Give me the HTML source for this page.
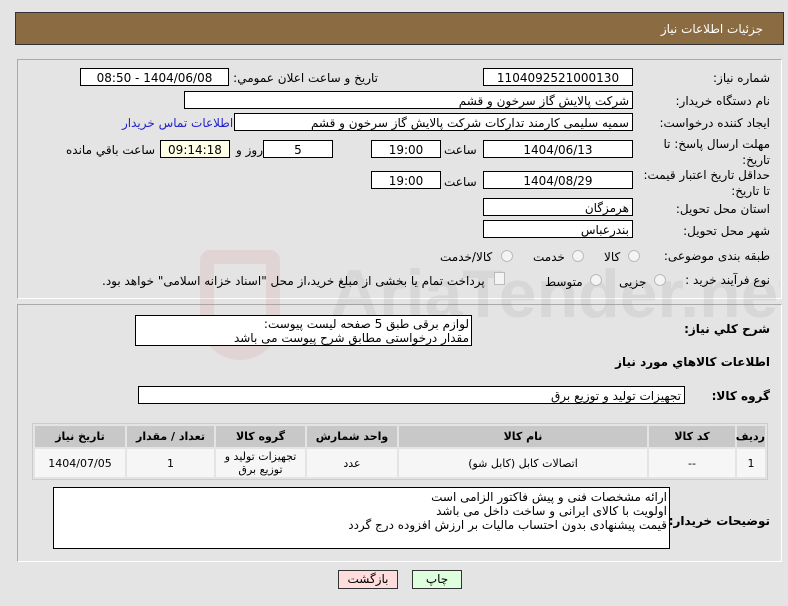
<!DOCTYPE html>
<html><head><meta charset="utf-8"><style>
body{margin:0;width:788px;height:606px;background:#e4e4e4;font-family:"DejaVu Sans","Liberation Sans",sans-serif;font-size:11px;color:#000;position:relative;overflow:hidden}
.a{position:absolute}
.hdr{left:15px;top:12px;width:767px;height:31px;background:#8b6b42;border:1px solid #333}
.hdr span{position:absolute;right:20px;top:9px;color:#fff;font-size:12px}
.pan{border:1px solid #aaa;border-right-color:#fff;border-bottom-color:#fff}
.in{position:absolute;background:#fff;border:1px solid #000;height:18px;line-height:18px;font-size:12px;direction:rtl;padding:0 3px;box-sizing:border-box;white-space:nowrap;overflow:hidden}
.c{text-align:center}
.l{position:absolute;direction:rtl;white-space:nowrap;font-size:12px}
.r{right:18px}
.rad{position:absolute;width:10px;height:10px;border-radius:50%;border:1px solid #bbb;background:#f4f4f4}
table{border-collapse:separate;border-spacing:2px;position:absolute;left:32px;top:423px;width:736px;table-layout:fixed;background:#e4e4e4;border:1px solid #ccc;direction:rtl}
th{background:#c8c8c8;height:21px;font-size:11px;font-weight:bold;padding:0}
td{background:#f6f6f6;height:28px;text-align:center;font-size:11px;padding:0}
.btn{position:absolute;height:17px;border:1px solid #333;font-size:12px;text-align:center;line-height:17px}
</style></head><body>
<div class="a hdr"><span>جزئیات اطلاعات نیاز</span></div>
<div class="a pan" style="left:17px;top:59px;width:763px;height:238px"></div>
<div class="a pan" style="left:17px;top:304px;width:763px;height:256px"></div>
<div class="a" style="left:200px;top:250px;width:80px;height:110px;border:14px solid rgba(210,120,120,0.15);border-radius:10px 10px 40px 40px;box-sizing:border-box"></div>
<div class="a" style="left:330px;top:255px;width:450px;height:80px;overflow:hidden"><div style="font-size:68px;color:rgba(120,120,120,0.12);font-weight:bold;font-family:'Liberation Sans';white-space:nowrap">AriaTender.net</div></div>

<div class="l r" style="top:71px">شماره نیاز:</div>
<div class="in c" style="left:483px;top:68px;width:150px">1104092521000130</div>
<div class="l" style="right:410px;top:71px">تاریخ و ساعت اعلان عمومي:</div>
<div class="in c" style="left:80px;top:68px;width:149px">1404/06/08 - 08:50</div>

<div class="l r" style="top:94px">نام دستگاه خریدار:</div>
<div class="in" style="left:184px;top:91px;width:449px">شرکت پالایش گاز سرخون و قشم</div>

<div class="l r" style="top:116px">ایجاد کننده درخواست:</div>
<div class="in" style="left:234px;top:113px;width:399px">سمیه سلیمی کارمند تدارکات شرکت پالایش گاز سرخون و قشم</div>
<div class="l" style="left:122px;top:116px;color:#22c">اطلاعات تماس خریدار</div>

<div class="l r" style="top:136px;line-height:16px">مهلت ارسال پاسخ: تا<br>تاریخ:</div>
<div class="in c" style="left:483px;top:140px;width:150px">1404/06/13</div>
<div class="l" style="left:444px;top:143px">ساعت</div>
<div class="in c" style="left:371px;top:140px;width:70px">19:00</div>
<div class="in c" style="left:263px;top:140px;width:70px">5</div>
<div class="l" style="left:236px;top:143px">روز و</div>
<div class="in c" style="left:160px;top:140px;width:70px;background:#ffffe8">09:14:18</div>
<div class="l" style="left:66px;top:143px">ساعت باقي مانده</div>

<div class="l r" style="top:167px;line-height:16px">حداقل تاریخ اعتبار قیمت:<br>تا تاریخ:</div>
<div class="in c" style="left:483px;top:171px;width:150px">1404/08/29</div>
<div class="l" style="left:444px;top:175px">ساعت</div>
<div class="in c" style="left:371px;top:171px;width:70px">19:00</div>

<div class="l r" style="top:202px">استان محل تحویل:</div>
<div class="in" style="left:483px;top:198px;width:150px">هرمزگان</div>
<div class="l r" style="top:224px">شهر محل تحویل:</div>
<div class="in" style="left:483px;top:220px;width:150px">بندرعباس</div>

<div class="l r" style="top:249px">طبقه بندی موضوعی:</div>
<div class="rad" style="left:628px;top:250px"></div><div class="l" style="left:604px;top:250px">کالا</div>
<div class="rad" style="left:572px;top:250px"></div><div class="l" style="left:533px;top:250px">خدمت</div>
<div class="rad" style="left:501px;top:250px"></div><div class="l" style="left:440px;top:250px">کالا/خدمت</div>

<div class="l r" style="top:273px">نوع فرآیند خرید :</div>
<div class="rad" style="left:654px;top:274px"></div><div class="l" style="left:619px;top:275px">جزیی</div>
<div class="rad" style="left:590px;top:274px"></div><div class="l" style="left:545px;top:275px">متوسط</div>
<div class="a" style="left:494px;top:272px;width:9px;height:11px;border:1px solid #bbb;background:#f4f4f4"></div>
<div class="l" style="left:102px;top:274px">پرداخت تمام یا بخشی از مبلغ خرید،از محل "اسناد خزانه اسلامی" خواهد بود.</div>

<div class="l r" style="top:322px;font-weight:bold">شرح کلي نیاز:</div>
<div class="a" style="left:135px;top:315px;width:337px;height:31px;border:1px solid #000;background:#fff;direction:rtl;font-size:12px;line-height:14px;padding:1px 2px;box-sizing:border-box;overflow:hidden">لوازم برقی طبق 5 صفحه لیست پیوست:<br>مقدار درخواستی مطابق شرح پیوست می باشد</div>
<div class="l r" style="top:355px;font-weight:bold">اطلاعات کالاهاي مورد نیاز</div>
<div class="l r" style="top:389px;font-weight:bold">گروه کالا:</div>
<div class="in" style="left:138px;top:386px;width:547px">تجهیزات تولید و توزیع برق</div>

<table>
<colgroup><col style="width:28px"><col style="width:86px"><col style="width:248px"><col style="width:90px"><col style="width:89px"><col style="width:87px"><col></colgroup>
<tr><th>ردیف</th><th>کد کالا</th><th>نام کالا</th><th>واحد شمارش</th><th>گروه کالا</th><th>تعداد / مقدار</th><th>تاریخ نیاز</th></tr>
<tr><td>1</td><td>--</td><td>اتصالات کابل (کابل شو)</td><td>عدد</td><td style="line-height:13px">تجهیزات تولید و<br>توزیع برق</td><td>1</td><td>1404/07/05</td></tr>
</table>

<div class="l r" style="top:514px;font-weight:bold">توضیحات خریدار:</div>
<div class="a" style="left:53px;top:487px;width:617px;height:62px;border:1px solid #000;background:#fff;direction:rtl;font-size:12px;line-height:14px;padding:2px 2px;box-sizing:border-box">ارائه مشخصات فنی و پیش فاکتور الزامی است<br>اولویت با کالای ایرانی و ساخت داخل می باشد<br>قیمت پیشنهادی بدون احتساب مالیات بر ارزش افزوده درج گردد</div>

<div class="btn" style="left:338px;top:570px;width:58px;background:#fdd">بازگشت</div>
<div class="btn" style="left:412px;top:570px;width:48px;background:#dfd">چاپ</div>
</body></html>
